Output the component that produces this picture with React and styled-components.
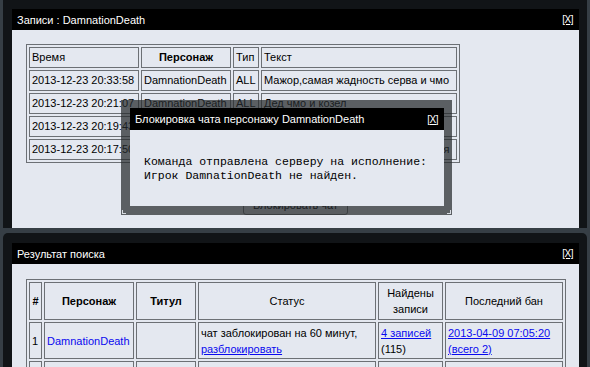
import styled, { createGlobalStyle } from "styled-components";

const GlobalStyle = createGlobalStyle`
  html, body {
    margin: 0;
    padding: 0;
  }
  body {
    background: #353c43;
    font-family: "Liberation Sans", Arial, sans-serif;
    font-size: 11px;
    overflow: hidden;
  }
`;

const Page = styled.div`
  position: relative;
  width: 590px;
  height: 367px;
  overflow: hidden;
  padding: 0 3px;
  box-sizing: border-box;
  display: flex;
  flex-direction: column;
  gap: 5px;
  background: #363e45;
`;

const Window = styled.div`
  background: #111417;
  padding: ${(p) => p.$top}px 8px 0 9px;
  border-radius: ${(p) => (p.$round ? "5px 5px 0 0" : "0")};
  display: flex;
  flex-direction: column;
  flex: ${(p) => (p.$grow ? 1 : "none")};
  min-height: 0;
`;

const TitleBar = styled.div`
  height: ${(p) => p.$h || 21}px;
  flex: none;
  background: #000;
  color: #fff;
  display: flex;
  align-items: center;
  justify-content: space-between;
  padding: 0 6px 0 5px;
  font-size: 11px;
  white-space: nowrap;
`;

const Close = styled.span`
  font-size: 10px;
  text-decoration: underline;
  letter-spacing: -0.5px;
  color: #fff;
  cursor: pointer;
`;

const Content = styled.div`
  background: #e4e8f0;
  padding: ${(p) => p.$top}px 14px 0;
  height: ${(p) => (p.$h ? `${p.$h}px` : "auto")};
  flex: ${(p) => (p.$h ? "none" : 1)};
  box-sizing: border-box;
  display: flex;
  flex-direction: column;
  align-items: flex-start;
`;

const Table = styled.table`
  border-collapse: separate;
  border-spacing: 2px;
  border: 1px solid #6c7075;
  table-layout: fixed;
  width: ${(p) => p.$w}px;
  font-size: 11px;
  color: #000;
`;

const Cell = styled.td`
  border: 1px solid #6c7075;
  padding: 0 2px;
  height: ${(p) => p.$h}px;
  line-height: ${(p) => (p.$h > 25 ? "16px" : "13px")};
  text-align: ${(p) => (p.$center ? "center" : "left")};
  font-weight: ${(p) => (p.$bold ? "bold" : "normal")};
  white-space: ${(p) => (p.$wrap ? "normal" : "nowrap")};
  overflow: hidden;
  vertical-align: middle;
`;

const Link = styled.a`
  color: #0a0aef;
  text-decoration: ${(p) => (p.$plain ? "none" : "underline")};
  cursor: pointer;
`;

const Button = styled.button`
  align-self: center;
  margin-top: 32px;
  width: 105px;
  height: 20px;
  padding: 0;
  font-family: "Liberation Sans", Arial, sans-serif;
  font-size: 11px;
  color: #000;
  background: #dfe3ea;
  border: 1px solid #6f7378;
  border-radius: 3px;
`;

const Modal = styled.div`
  position: absolute;
  left: 121px;
  top: 100px;
  width: 331px;
  height: 115px;
  box-sizing: border-box;
  padding: 8px 8px 9px 9px;
  background: rgba(38, 41, 45, 0.72);
  display: flex;
  flex-direction: column;
  &::before,
  &::after {
    content: "";
    position: absolute;
    bottom: 1px;
    width: 3px;
    height: 3px;
    border-bottom: 1px solid #d8dce2;
  }
  &::before {
    left: 1px;
    border-left: 1px solid #d8dce2;
  }
  &::after {
    right: 1px;
    border-right: 1px solid #d8dce2;
  }
`;

const ModalBody = styled.div`
  flex: 1;
  background: #e4e8f0;
  padding: 25px 14px 0;
  font-family: "Liberation Mono", "Courier New", monospace;
  font-size: 11.5px;
  line-height: 14px;
  color: #000;
  white-space: pre;
`;

const logRows = [
  ["2013-12-23 20:33:58", "DamnationDeath", "ALL", "Мажор,самая жадность серва и чмо"],
  ["2013-12-23 20:21:07", "DamnationDeath", "ALL", "Дед чмо и козел"],
  ["2013-12-23 20:19:43", "DamnationDeath", "ALL", "ты кто такой вообще"],
  ["2013-12-23 20:17:50", "DamnationDeath", "ALL", "ну и кто виноват,что ты обижаешься"],
];

const App = () => {
  return (
    <Page>
      <GlobalStyle />
      <Window $top={9}>
        <TitleBar>
          <span>Записи : DamnationDeath</span>
          <Close>[X]</Close>
        </TitleBar>
        <Content $top={14} $h={198}>
          <Table $w={434}>
            <colgroup>
              <col style={{ width: 110 }} />
              <col style={{ width: 90 }} />
              <col style={{ width: 26 }} />
              <col style={{ width: 196 }} />
            </colgroup>
            <tbody>
              <tr>
                <Cell $h={19}>Время</Cell>
                <Cell $h={19} $center $bold>Персонаж</Cell>
                <Cell $h={19}>Тип</Cell>
                <Cell $h={19}>Текст</Cell>
              </tr>
              {logRows.map((r) => (
                <tr key={r[0]}>
                  {r.map((c, i) => (
                    <Cell key={i} $h={19}>{c}</Cell>
                  ))}
                </tr>
              ))}
            </tbody>
          </Table>
          <Button>Блокировать чат</Button>
        </Content>
      </Window>

      <Window $top={10} $grow $round>
        <TitleBar>
          <span>Результат поиска</span>
          <Close>[X]</Close>
        </TitleBar>
        <Content $top={15}>
          <Table $w={540}>
            <colgroup>
              <col style={{ width: 13 }} />
              <col style={{ width: 90 }} />
              <col style={{ width: 60 }} />
              <col style={{ width: 178 }} />
              <col style={{ width: 65 }} />
              <col style={{ width: 118 }} />
            </colgroup>
            <tbody>
              <tr>
                <Cell $h={36} $center $bold>#</Cell>
                <Cell $h={36} $center $bold>Персонаж</Cell>
                <Cell $h={36} $center $bold>Титул</Cell>
                <Cell $h={36} $center>Статус</Cell>
                <Cell $h={36} $center $wrap>Найдены записи</Cell>
                <Cell $h={36} $center>Последний бан</Cell>
              </tr>
              <tr>
                <Cell $h={35}>1</Cell>
                <Cell $h={35}><Link $plain>DamnationDeath</Link></Cell>
                <Cell $h={35}></Cell>
                <Cell $h={35} $wrap>
                  чат заблокирован на 60 минут, <Link>разблокировать</Link>
                </Cell>
                <Cell $h={35} $wrap>
                  <Link>4 записей</Link>
                  <br />
                  (115)
                </Cell>
                <Cell $h={35} $wrap>
                  <Link>2013-04-09 07:05:20</Link>
                  <br />
                  <Link>(всего 2)</Link>
                </Cell>
              </tr>
              <tr>
                <Cell $h={35}>2</Cell>
                <Cell $h={35}><Link $plain>Damnation</Link></Cell>
                <Cell $h={35}></Cell>
                <Cell $h={35} $wrap>нет блокировки</Cell>
                <Cell $h={35} $wrap>
                  <Link>1 записей</Link>
                  <br />
                  (3)
                </Cell>
                <Cell $h={35} $wrap>
                  <Link>2013-11-01 09:05:57</Link>
                  <br />
                  <Link>(всего 1)</Link>
                </Cell>
              </tr>
            </tbody>
          </Table>
        </Content>
      </Window>

      <Modal>
        <TitleBar $h={22}>
          <span>Блокировка чата персонажу DamnationDeath</span>
          <Close>[X]</Close>
        </TitleBar>
        <ModalBody>
          {"Команда отправлена серверу на исполнение:\nИгрок DamnationDeath не найден."}
        </ModalBody>
      </Modal>
    </Page>
  );
};

export default App;
